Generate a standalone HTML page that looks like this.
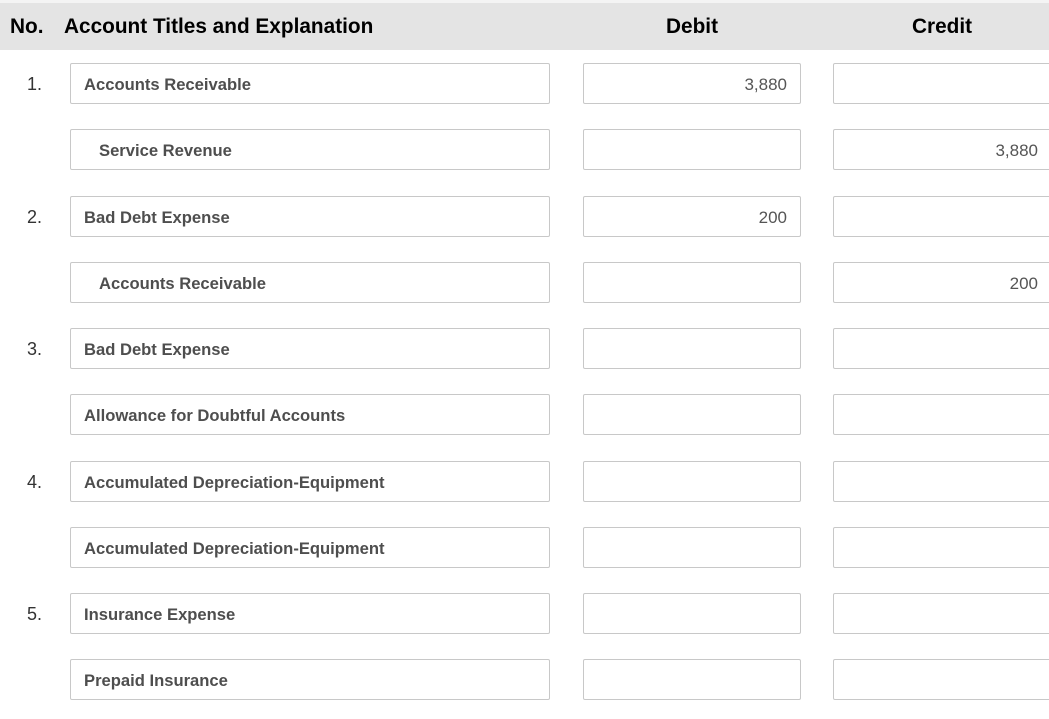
<!DOCTYPE html>
<html><head><style>
body{margin:0;width:1049px;height:719px;background:#fff;font-family:"Liberation Sans",sans-serif;position:relative;overflow:hidden}
.top{position:absolute;left:0;top:0;width:1049px;height:3px;background:#f4f4f4}
.hd{position:absolute;left:0;top:3px;width:1049px;height:47px;background:#e4e4e4;font-weight:bold;font-size:20.8px;color:#000}
.hd span{position:absolute;top:12px}
.box{position:absolute;border:1px solid #c8c8c8;border-radius:2px;background:#fff;box-sizing:border-box;height:41px;font-size:16px;color:#555;line-height:41px}
.a{left:70px;width:480px;padding-left:13px;font-weight:bold;font-size:16.6px;color:#4e4e4e}
.a.i{padding-left:28px}
.d{left:583px;width:218px;text-align:right;padding-right:13px;font-size:17px}
.c{left:833px;width:230px;text-align:right;padding-right:24px;font-size:17px}
.n{position:absolute;left:27px;font-size:18px;color:#333}
</style></head><body>
<div class="top"></div>
<div class="hd"><span style="left:10px">No.</span><span style="left:64px">Account Titles and Explanation</span><span style="left:666px">Debit</span><span style="left:912px">Credit</span></div>

<div class="n" style="top:74px">1.</div>
<div class="box a" style="top:63px">Accounts Receivable</div>
<div class="box d" style="top:63px">3,880</div>
<div class="box c" style="top:63px"></div>

<div class="box a i" style="top:129px">Service Revenue</div>
<div class="box d" style="top:129px"></div>
<div class="box c" style="top:129px">3,880</div>

<div class="n" style="top:207px">2.</div>
<div class="box a" style="top:196px">Bad Debt Expense</div>
<div class="box d" style="top:196px">200</div>
<div class="box c" style="top:196px"></div>

<div class="box a i" style="top:262px">Accounts Receivable</div>
<div class="box d" style="top:262px"></div>
<div class="box c" style="top:262px">200</div>

<div class="n" style="top:339px">3.</div>
<div class="box a" style="top:328px">Bad Debt Expense</div>
<div class="box d" style="top:328px"></div>
<div class="box c" style="top:328px"></div>

<div class="box a" style="top:394px">Allowance for Doubtful Accounts</div>
<div class="box d" style="top:394px"></div>
<div class="box c" style="top:394px"></div>

<div class="n" style="top:472px">4.</div>
<div class="box a" style="top:461px">Accumulated Depreciation-Equipment</div>
<div class="box d" style="top:461px"></div>
<div class="box c" style="top:461px"></div>

<div class="box a" style="top:527px">Accumulated Depreciation-Equipment</div>
<div class="box d" style="top:527px"></div>
<div class="box c" style="top:527px"></div>

<div class="n" style="top:604px">5.</div>
<div class="box a" style="top:593px">Insurance Expense</div>
<div class="box d" style="top:593px"></div>
<div class="box c" style="top:593px"></div>

<div class="box a" style="top:659px">Prepaid Insurance</div>
<div class="box d" style="top:659px"></div>
<div class="box c" style="top:659px"></div>
</body></html>
